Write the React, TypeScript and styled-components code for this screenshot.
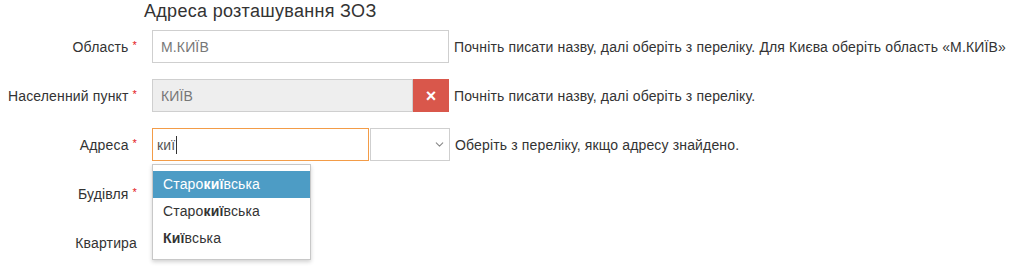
import React from "react";
import styled, { createGlobalStyle } from "styled-components";
import { ChevronDown } from "lucide-react";

const GlobalStyle = createGlobalStyle`
  body {
    margin: 0;
    background: #fff;
    font-family: "Liberation Sans", Helvetica, Arial, sans-serif;
    font-size: 14px;
    letter-spacing: 0.15px;
    color: #333;
  }
`;

interface FieldRowType {
  label: string;
  required?: boolean;
  children: React.ReactNode;
}

const FieldRow: React.FC<FieldRowType> = ({ label, required, children }) => (
  <S.Row>
    <S.Label>
      {label}
      {required && <S.Star>*</S.Star>}
    </S.Label>
    {children}
  </S.Row>
);

const App: React.FC = () => {
  return (
    <S.Form>
      <GlobalStyle />
      <S.Title>Адреса розташування ЗОЗ</S.Title>

      <FieldRow label="Область" required>
        <S.Input $width={297}>М.КИЇВ</S.Input>
        <S.Help>
          Почніть писати назву, далі оберіть з переліку. Для Києва оберіть
          область «М.КИЇВ»
        </S.Help>
      </FieldRow>

      <FieldRow label="Населенний пункт" required>
        <S.Group>
          <S.Input $width={261} $disabled>
            КИЇВ
          </S.Input>
          <S.ClearBtn>×</S.ClearBtn>
        </S.Group>
        <S.Help>Почніть писати назву, далі оберіть з переліку.</S.Help>
      </FieldRow>

      <FieldRow label="Адреса" required>
        <S.Group>
          <S.Input $width={217} $focused>
            <S.Typed>киї</S.Typed>
            <S.Caret />
          </S.Input>
          <S.SelectBox>
            <ChevronDown size={13} strokeWidth={2} color="#8a8a8a" />
          </S.SelectBox>
          <S.Menu>
            <S.MenuItem $active>
              Старо<b>киї</b>вська
            </S.MenuItem>
            <S.MenuItem>
              Старо<b>киї</b>вська
            </S.MenuItem>
            <S.MenuItem>
              <b>Киї</b>вська
            </S.MenuItem>
          </S.Menu>
        </S.Group>
        <S.Help>Оберіть з переліку, якщо адресу знайдено.</S.Help>
      </FieldRow>

      <FieldRow label="Будівля" required>
        <S.Input $width={98} />
      </FieldRow>

      <FieldRow label="Квартира">
        <S.Input $width={98} />
      </FieldRow>
    </S.Form>
  );
};

const S = {
  Form: styled.div`
    width: 1010px;
    height: 266px;
    overflow: hidden;
  `,
  Title: styled.h3`
    margin: 0 0 8px 144px;
    font-size: 18px;
    font-weight: 400;
    letter-spacing: 0.3px;
    line-height: 22px;
    color: #333;
  `,
  Row: styled.div`
    display: flex;
    align-items: center;
    height: 33px;
    margin-bottom: 16px;
  `,
  Label: styled.div`
    width: 152px;
    flex-shrink: 0;
    box-sizing: border-box;
    padding-right: 15px;
    text-align: right;
    white-space: nowrap;
    color: #333;
  `,
  Star: styled.span`
    color: #e4141b;
    font-size: 11px;
    margin-left: 4px;
    vertical-align: 3px;
  `,
  Group: styled.div`
    position: relative;
    display: flex;
    height: 33px;
  `,
  Input: styled.div<{ $width: number; $disabled?: boolean; $focused?: boolean }>`
    width: ${(p) => p.$width}px;
    height: 33px;
    box-sizing: border-box;
    display: flex;
    align-items: center;
    padding: 0 8px;
    border: 1px solid ${(p) => (p.$focused ? "#f39c48" : "#cfcfcf")};
    background: ${(p) => (p.$disabled ? "#eeeeee" : "#fff")};
    color: #777;
  `,
  Typed: styled.span`
    color: #555;
    margin-left: -4px;
  `,
  Caret: styled.span`
    width: 1px;
    height: 18px;
    margin-left: 1px;
    background: #333;
  `,
  ClearBtn: styled.div`
    width: 36px;
    height: 33px;
    display: flex;
    align-items: center;
    justify-content: center;
    background: #d9574b;
    color: #fff;
    font-size: 18px;
    font-weight: 700;
    line-height: 1;
  `,
  SelectBox: styled.div`
    width: 80px;
    height: 33px;
    box-sizing: border-box;
    margin-left: 1px;
    border: 1px solid #cfcfcf;
    display: flex;
    align-items: center;
    justify-content: flex-end;
    padding-right: 3px;
  `,
  Menu: styled.div`
    position: absolute;
    top: 36px;
    left: 0;
    z-index: 10;
    width: 159px;
    box-sizing: border-box;
    padding: 6px 0 7px;
    background: #fff;
    border: 1px solid #c8c8c8;
    box-shadow: 0 2px 4px rgba(0, 0, 0, 0.18);
  `,
  MenuItem: styled.div<{ $active?: boolean }>`
    height: 27px;
    box-sizing: border-box;
    padding: 0 0 2px 10px;
    display: flex;
    align-items: center;
    white-space: nowrap;
    background: ${(p) => (p.$active ? "#4d9cc5" : "transparent")};
    color: ${(p) => (p.$active ? "#fff" : "#333")};
    b {
      font-weight: 700;
    }
  `,
  Help: styled.div`
    margin-left: 5px;
    white-space: nowrap;
    color: #333;
  `,
};

export default App;
